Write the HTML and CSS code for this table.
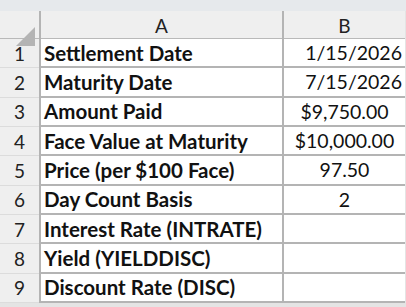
FILE: index.html
```html
<!DOCTYPE html>
<html>
<head>
<meta charset="utf-8">
<link rel="stylesheet" href="styles.css">
</head>
<body>
<div class="topbar"></div>
<div class="sheet">
  <div class="corner"><div class="tri"></div></div>
  <div class="colhead">A</div>
  <div class="colhead">B</div>

  <div class="rowhead">1</div><div class="cell label">Settlement Date</div><div class="cell right">1/15/2026</div>
  <div class="rowhead">2</div><div class="cell label">Maturity Date</div><div class="cell right">7/15/2026</div>
  <div class="rowhead">3</div><div class="cell label">Amount Paid</div><div class="cell center">$9,750.00</div>
  <div class="rowhead">4</div><div class="cell label">Face Value at Maturity</div><div class="cell center">$10,000.00</div>
  <div class="rowhead">5</div><div class="cell label">Price (per $100 Face)</div><div class="cell center">97.50</div>
  <div class="rowhead">6</div><div class="cell label">Day Count Basis</div><div class="cell center">2</div>
  <div class="rowhead">7</div><div class="cell label">Interest Rate (INTRATE)</div><div class="cell"></div>
  <div class="rowhead">8</div><div class="cell label">Yield (YIELDDISC)</div><div class="cell"></div>
  <div class="rowhead">9</div><div class="cell label">Discount Rate (DISC)</div><div class="cell"></div>
</div>
</body>
</html>
```
FILE: styles.css
```css
html, body {
  margin: 0;
  padding: 0;
  width: 406px;
  height: 307px;
  overflow: hidden;
  background: #e4e4e4;
  font-family: Lato, "Liberation Sans", sans-serif;
  color: #111;
}
.topbar {
  height: 11px;
  background: #e6e9ec;
}
.sheet {
  display: grid;
  grid-template-columns: 39px 241px 121px;
  grid-template-rows: 28px repeat(9, 29.33px);
  column-gap: 2px;
  width: 403px;
  background: #b4b4b4;
  border-right: 2px solid #b4b4b4;
}
.corner, .colhead {
  background: #efefef;
  border-bottom: 1px solid #b9b9b9;
  box-sizing: border-box;
}
.corner {
  position: relative;
}
.tri {
  position: absolute;
  left: 16px;
  top: 16px;
  width: 0;
  height: 0;
  border-left: 19px solid transparent;
  border-bottom: 19px solid #b4b4b4;
}
.colhead {
  display: flex;
  align-items: center;
  justify-content: center;
  font-size: 19px;
  color: #222;
  padding-top: 2px;
}
.rowhead {
  background: #efefef;
  display: flex;
  align-items: center;
  justify-content: center;
  font-size: 19px;
  color: #222;
  border-bottom: 1px solid #dcdcdc;
  box-sizing: border-box;
}
.cell {
  background: #fff;
  border-bottom: 2px solid #b4b4b4;
  box-sizing: border-box;
  display: flex;
  align-items: center;
  font-size: 19.5px;
  white-space: nowrap;
  overflow: hidden;
}
.label {
  font-weight: bold;
  font-size: 20.5px;
  padding-left: 3px;
}
.right { justify-content: flex-end; padding-right: 3px; }
.center { justify-content: center; }
```
